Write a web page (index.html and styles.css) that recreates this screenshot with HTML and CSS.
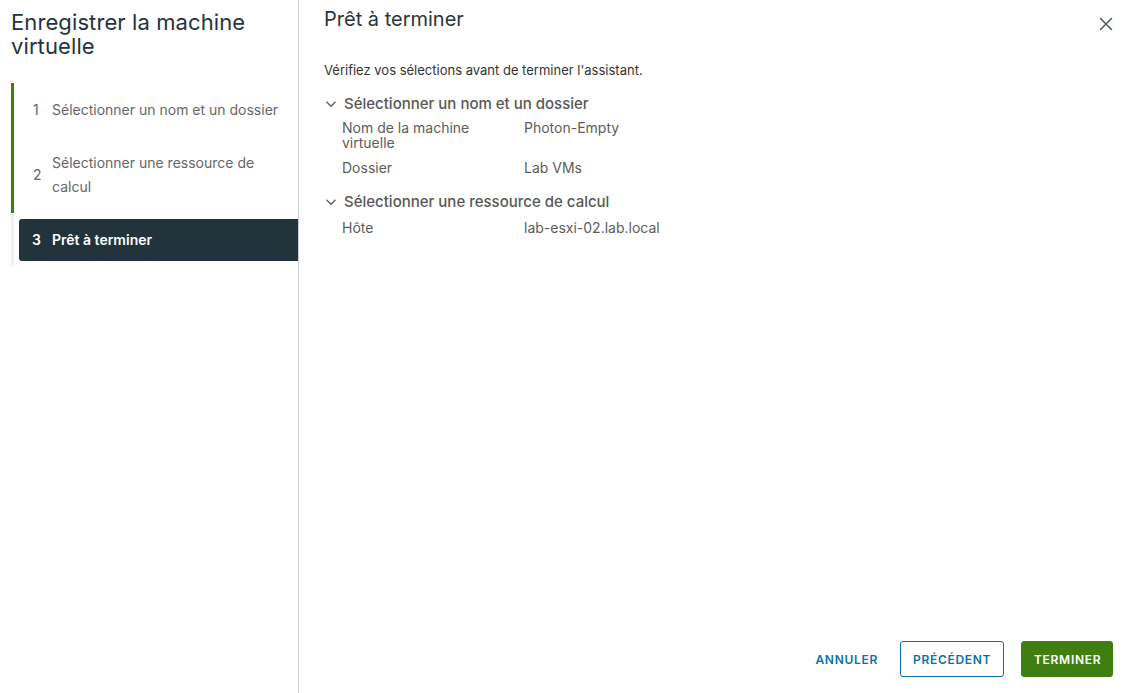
FILE: index.html
```html
<!DOCTYPE html>
<html lang="fr">
<head>
<meta charset="utf-8">
<title>Enregistrer la machine virtuelle</title>
<link rel="stylesheet" href="styles.css">
</head>
<body>
<div class="wizard">
  <aside class="side">
    <h1 class="side-title">Enregistrer la machine virtuelle</h1>
    <nav class="steps">
      <div class="steps-done">
        <div class="step step-one"><span class="num">1</span><span class="label">Sélectionner un nom et un dossier</span></div>
        <div class="step step-two"><span class="num">2</span><span class="label">Sélectionner une ressource de calcul</span></div>
      </div>
      <div class="steps-rest">
        <div class="step step-active"><span class="num">3</span><span class="label">Prêt à terminer</span></div>
      </div>
    </nav>
  </aside>
  <main class="main">
    <header class="main-head">
      <h2 class="main-title">Prêt à terminer</h2>
      <button class="close" aria-label="Fermer">
        <svg width="14" height="14" viewBox="0 0 14 14"><path d="M1.5 1.5 L12.5 12.5 M12.5 1.5 L1.5 12.5" stroke="#4e5b63" stroke-width="1.5" fill="none" stroke-linecap="round"/></svg>
      </button>
    </header>
    <div class="content">
      <p class="intro">Vérifiez vos sélections avant de terminer l'assistant.</p>
      <section class="group">
        <div class="group-head"><svg class="chev" width="12" height="12" viewBox="0 0 12 12"><path d="M1.5 3.8 L6 8.3 L10.5 3.8" stroke="#5a5a5a" stroke-width="1.3" fill="none"/></svg><span>Sélectionner un nom et un dossier</span></div>
        <div class="row"><div class="key">Nom de la machine virtuelle</div><div class="val">Photon-Empty</div></div>
        <div class="row"><div class="key">Dossier</div><div class="val">Lab VMs</div></div>
      </section>
      <section class="group group-second">
        <div class="group-head"><svg class="chev" width="12" height="12" viewBox="0 0 12 12"><path d="M1.5 3.8 L6 8.3 L10.5 3.8" stroke="#5a5a5a" stroke-width="1.3" fill="none"/></svg><span>Sélectionner une ressource de calcul</span></div>
        <div class="row"><div class="key">Hôte</div><div class="val">lab-esxi-02.lab.local</div></div>
      </section>
    </div>
    <footer class="footer">
      <button class="btn btn-flat">Annuler</button>
      <button class="btn btn-outline">Précédent</button>
      <button class="btn btn-success">Terminer</button>
    </footer>
  </main>
</div>
</body>
</html>
```

FILE: styles.css
```css
* { box-sizing: border-box; }
html, body { margin: 0; padding: 0; height: 100%; }
body {
  font-family: Inter, "Noto Sans", "Liberation Sans", sans-serif;
  background: #fff;
  color: #333;
}
.wizard {
  display: flex;
  height: 693px;
}
.side {
  width: 299px;
  flex: none;
  border-right: 1px solid #c9d3d8;
  padding: 10px 0 0 11px;
}
.side-title {
  margin: 0;
  font-size: 22px;
  font-weight: 400;
  line-height: 24px;
  color: #25333c;
  letter-spacing: 0.1px;
}
.steps {
  margin-top: 25px;
}
.steps-done {
  border-left: 3px solid #3f7f12;
}
.steps-rest {
  border-left: 3px solid #edf2f4;
  padding: 6px 0 5px 5px;
}
.step {
  display: flex;
  align-items: center;
  font-size: 14px;
  line-height: 24px;
  color: #666;
}
.step .num {
  width: 19px;
  flex: none;
}
.step-one { padding: 15px 0 15px 19px; }
.step-two { padding: 14px 0 14px 19px; }
.step-two .label { width: 220px; }
.step-active {
  background: #22333c;
  color: #fff;
  font-weight: 600;
  height: 42px;
  padding-left: 13px;
  border-radius: 3px 0 0 3px;
}
.step-active .num { width: 20px; }
.main {
  flex: 1;
  display: flex;
  flex-direction: column;
  padding: 7px 18px 16px 25px;
}
.main-head {
  display: flex;
  justify-content: space-between;
  align-items: flex-start;
}
.main-title {
  margin: 0;
  font-size: 20px;
  font-weight: 400;
  line-height: 24px;
  color: #2c3438;
}
.close {
  border: 0;
  background: none;
  padding: 0;
  margin: 10px 0 0 0;
  width: 14px;
  height: 14px;
  cursor: pointer;
}
.content { flex: 1; }
.intro {
  margin: 30px 0 0 0;
  font-size: 13px;
  line-height: 18px;
  color: #333;
}
.group { margin-top: 15px; }
.group + .group { margin-top: 17px; }
.group-head {
  display: flex;
  align-items: center;
  font-size: 15px;
  font-weight: 500;
  line-height: 20px;
  color: #575757;
}
.chev { margin: 0 7px 0 1px; }
.row {
  display: flex;
  font-size: 14px;
  line-height: 15px;
  color: #5c5c5c;
  padding-left: 18px;
  margin-top: 10px;
}
.group-head + .row { margin-top: 6px; }
.group-second .group-head + .row { margin-top: 8px; }
.key { width: 182px; padding-right: 40px; }
.footer {
  display: flex;
  justify-content: flex-end;
  align-items: center;
}
.btn {
  font-family: inherit;
  font-size: 12px;
  font-weight: 600;
  letter-spacing: 0.7px;
  text-transform: uppercase;
  height: 36px;
  border-radius: 3px;
  padding: 0 12px;
  cursor: pointer;
}
.btn-flat {
  background: none;
  border: 1px solid transparent;
  color: #0a72a4;
  margin-right: 9px;
}
.btn-outline {
  background: #fff;
  border: 1px solid #0a72a4;
  color: #0a72a4;
  width: 104px;
  margin-right: 17px;
}
.btn-success {
  background: #3f7f12;
  border: 1px solid #3f7f12;
  color: #fff;
  width: 92px;
}
```
